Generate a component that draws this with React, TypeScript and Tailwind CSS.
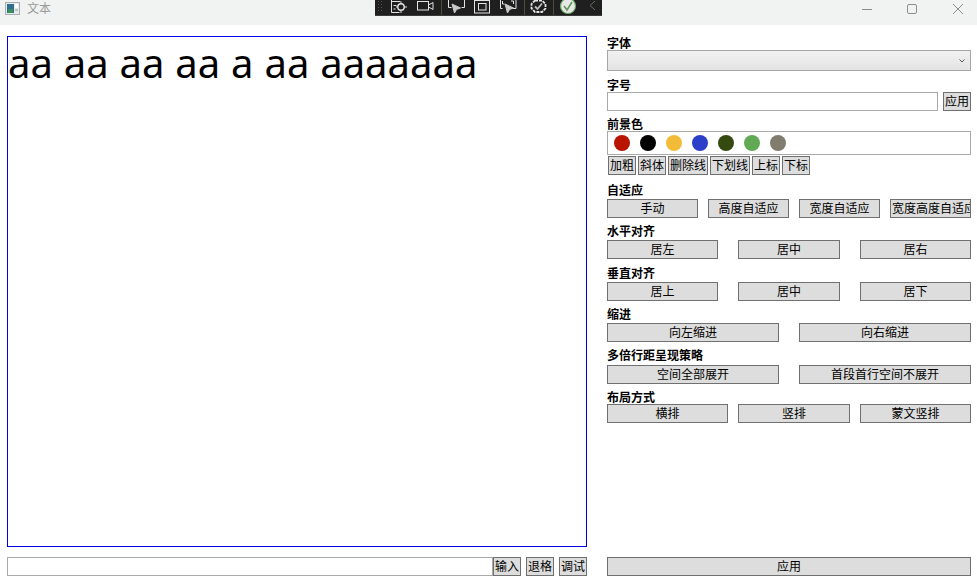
import React from 'react';

const font = { cjk: "font-['Noto_Sans_CJK_SC','Liberation_Sans',sans-serif]" };

const colors = ['bg-[#b81400]', 'bg-[#000000]', 'bg-[#f3bc38]', 'bg-[#2b3fc8]', 'bg-[#344a10]', 'bg-[#62a956]', 'bg-[#807c6e]'];

const Label = ({ text, className = '' }: { text: string; className?: string }) => (
  <div className={`h-[14px] text-[12px] leading-[13px] font-bold text-black ${className}`}>{text}</div>
);

const Btn = ({ text, className = '' }: { text: string; className?: string }) => (
  <button className={`h-[19px] pb-[2px] flex items-center justify-center overflow-hidden whitespace-nowrap border border-[#707070] bg-[#dddddd] text-[12px] leading-none text-black ${className}`}>
    {text}
  </button>
);

const ToolIcons = () => (
  <svg width="227" height="15" viewBox="0 0 227 15" fill="none" stroke="#e4e4e4" strokeWidth="1">
    {/* grip */}
    <g fill="#555" stroke="none">
      <rect x="3" y="1" width="1" height="1" /><rect x="6" y="1" width="1" height="1" />
      <rect x="3" y="4" width="1" height="1" /><rect x="6" y="4" width="1" height="1" />
      <rect x="3" y="7" width="1" height="1" /><rect x="6" y="7" width="1" height="1" />
      <rect x="3" y="10" width="1" height="1" /><rect x="6" y="10" width="1" height="1" />
    </g>
    {/* list + target */}
    <path d="M16.5 0v12.5h8M16.5 1.5h9M18.5 5.5h3M18.5 9h2" />
    <circle cx="26" cy="7" r="3.2" strokeWidth="1.4" />
    <path d="M26 1.5v2M26 10.5v2.5M21 7h2M29 7h3" />
    {/* camera */}
    <rect x="42.5" y="1.5" width="11" height="8.5" />
    <path d="M53.5 5l4.5-2.5v7l-4.5-2.5" />
    <path d="M66.5 0v15" stroke="#4a5230" />
    {/* cursor in corners */}
    <path d="M73.5 0v7.5h3M89.5 0v7.5h-3" />
    <path d="M77 4l2.5 9 2-3.5 4-1.5z" fill="#c9c9c9" stroke="#c9c9c9" />
    {/* square */}
    <rect x="99.5" y="0.5" width="15" height="12.5" />
    <rect x="103.5" y="3.5" width="7.5" height="6.5" />
    {/* cursor + dashed box */}
    <path d="M125.5 0v8.5h2M141 0v8.5h-3M127.5 1v3h2M136 1h2.5v3" />
    <path d="M130 4l2.5 9 2-3.5 4-1.5z" fill="#c9c9c9" stroke="#c9c9c9" />
    <path d="M149.5 0v15" stroke="#4a5230" />
    {/* gear check */}
    <path d="M160 0.5h7l3.5 3.5v4.5l-3.5 3.5h-7l-3.5-3.5V4z" strokeWidth="1.8" strokeDasharray="3 1" />
    <path d="M160 6.5l2.5 2.5 4.5-5.5" stroke="#bdbdbd" strokeWidth="1.8" />
    <path d="M178.5 0v15" stroke="#4a5230" />
    {/* check circle */}
    <circle cx="193" cy="6" r="7.5" fill="#e8e8e8" stroke="#6fa868" strokeWidth="1.2" />
    <path d="M189 6l3 4 5-8" stroke="#5f9a58" strokeWidth="1.6" />
    {/* chevron */}
    <path d="M220 1l-5 4.5 5 4.5" stroke="#6a6f5c" />
  </svg>
);

export default function App() {
  return (
    <div className={`relative h-[581px] w-[977px] flex flex-col overflow-hidden bg-white ${font.cjk}`}>
      {/* title bar */}
      <div className="h-[25px] shrink-0 flex items-center bg-[#f1f3f3]">
        <svg className="ml-[5px] mb-[9px]" width="15" height="14" viewBox="0 0 15 14">
          <rect x="0.5" y="1.5" width="14" height="12" fill="#e8eaea" stroke="#a9b0b4" />
          <rect x="2" y="3" width="7" height="9" fill="#2e6f8e" />
          <rect x="3" y="8" width="5" height="4" fill="#3c8f5a" />
          <rect x="10" y="3" width="3" height="4" fill="#ffffff" />
          <rect x="10" y="8" width="3" height="2" fill="#b9c3c8" />
        </svg>
        <span className="ml-[7px] mb-[9px] text-[12px] leading-none text-[#9a9a9a]">文本</span>
        <div className="ml-auto mb-[7px] mr-[14px] flex items-center">
          <svg width="10" height="11" viewBox="0 0 10 11" stroke="#8d8d8d" fill="none"><path d="M0 5.5h10" /></svg>
          <svg className="ml-[35px]" width="10" height="11" viewBox="0 0 10 11" stroke="#8d8d8d" fill="none"><rect x="0.5" y="0.5" width="9" height="9" rx="1.5" /></svg>
          <svg className="ml-[36px]" width="10" height="11" viewBox="0 0 10 11" stroke="#8d8d8d" fill="none"><path d="M0 0l10 10M10 0L0 10" /></svg>
        </div>
      </div>

      {/* floating capture toolbar */}
      <div className="absolute left-[375px] top-0 h-[16px] w-[227px] bg-[#1f1f1f] border-b border-[#3a3a3a]">
        <ToolIcons />
      </div>

      <div className="flex-1 flex pl-[7px] pr-[6px] pt-[11px] pb-[5px]">
        {/* left column */}
        <div className="w-[580px] flex flex-col">
          <div className="h-[511px] border border-[#0000e6] bg-white">
            <div className="font-['Noto_Sans','Liberation_Sans',sans-serif] text-[40px] leading-[52px] [word-spacing:0.5px] text-black whitespace-pre">aa aa aa aa a aa aaaaaaa</div>
          </div>
          <div className="mt-[10px] h-[19px] flex">
            <input className="h-[19px] w-[486px] border border-[#a9a9a9] bg-white outline-none" />
            <Btn text="输入" className="w-[28px]" />
            <Btn text="退格" className="ml-[5px] w-[28px]" />
            <Btn text="调试" className="ml-[5px] w-[28px]" />
          </div>
        </div>

        {/* right column */}
        <div className="ml-[20px] w-[364px] flex flex-col">
          <Label text="字体" />
          <div className="h-[21px] flex items-center justify-end pr-[5px] border border-[#a6a6a6] bg-gradient-to-b from-[#f1f1f1] to-[#e4e4e4]">
            <svg width="6" height="4" viewBox="0 0 6 4" fill="none" stroke="#555"><path d="M0.5 0.5l2.5 2.5 2.5-2.5" /></svg>
          </div>

          <Label text="字号" className="mt-[7px]" />
          <div className="flex justify-between">
            <input className="h-[19px] w-[331px] border border-[#a9a9a9] bg-white outline-none" />
            <Btn text="应用" className="w-[28px]" />
          </div>

          <Label text="前景色" className="mt-[6px]" />
          <div className="h-[24px] flex items-center gap-[10px] pl-[6px] border border-[#a9a9a9]">
            {colors.map((c) => (
              <span key={c} className={`h-[16px] w-[16px] rounded-full ${c}`} />
            ))}
          </div>
          <div className="mt-[1px] ml-[1px] flex gap-[2px]">
            <Btn text="加粗" className="w-[28px]" />
            <Btn text="斜体" className="w-[28px]" />
            <Btn text="删除线" className="w-[40px]" />
            <Btn text="下划线" className="w-[40px]" />
            <Btn text="上标" className="w-[28px]" />
            <Btn text="下标" className="w-[28px]" />
          </div>

          <Label text="自适应" className="mt-[8px]" />
          <div className="mt-[2px] flex justify-between">
            <Btn text="手动" className="w-[91px]" />
            <Btn text="高度自适应" className="w-[81px]" />
            <Btn text="宽度自适应" className="w-[81px]" />
            <Btn text="宽度高度自适应" className="w-[81px] !justify-start pl-[1px]" />
          </div>

          <Label text="水平对齐" className="mt-[6px]" />
          <div className="mt-[2px] flex justify-between">
            <Btn text="居左" className="w-[111px]" />
            <Btn text="居中" className="w-[102px]" />
            <Btn text="居右" className="w-[111px]" />
          </div>

          <Label text="垂直对齐" className="mt-[7px]" />
          <div className="mt-[2px] flex justify-between">
            <Btn text="居上" className="w-[111px]" />
            <Btn text="居中" className="w-[102px]" />
            <Btn text="居下" className="w-[111px]" />
          </div>

          <Label text="缩进" className="mt-[6px]" />
          <div className="mt-[2px] flex justify-between">
            <Btn text="向左缩进" className="w-[172px]" />
            <Btn text="向右缩进" className="w-[172px]" />
          </div>

          <Label text="多倍行距呈现策略" className="mt-[6px]" />
          <div className="mt-[3px] flex justify-between">
            <Btn text="空间全部展开" className="w-[172px]" />
            <Btn text="首段首行空间不展开" className="w-[172px]" />
          </div>

          <Label text="布局方式" className="mt-[6px]" />
          <div className="flex justify-between">
            <Btn text="横排" className="w-[121px]" />
            <Btn text="竖排" className="w-[112px]" />
            <Btn text="蒙文竖排" className="w-[111px]" />
          </div>

          <Btn text="应用" className="mt-auto w-full" />
        </div>
      </div>
    </div>
  );
}
